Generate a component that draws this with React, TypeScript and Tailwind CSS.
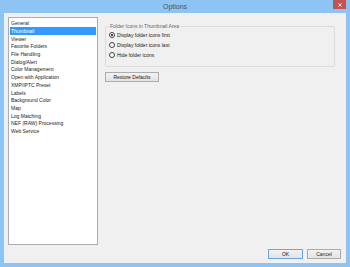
import { useState } from 'react'

const sections = [
  'General',
  'Thumbnail',
  'Viewer',
  'Favorite Folders',
  'File Handling',
  'Dialog/Alert',
  'Color Management',
  'Open with Application',
  'XMP/IPTC Preset',
  'Labels',
  'Background Color',
  'Map',
  'Log Matching',
  'NEF (RAW) Processing',
  'Web Service',
]

const folderOptions = ['Display folder icons first', 'Display folder icons last', 'Hide folder icons']

const font = { fontFamily: '"Liberation Sans", Arial, sans-serif' }

function Radio({ label, checked, onClick }: { label: string; checked: boolean; onClick: () => void }) {
  return (
    <button onClick={onClick} className="flex h-[10px] items-center gap-[2px] text-left">
      <span className="flex h-[6px] w-[6px] items-center justify-center rounded-full border border-[#444] bg-[#fafafa]">
        {checked && <span className="h-[2px] w-[2px] rounded-full bg-[#111]" />}
      </span>
      <span className="text-[5px] leading-[6px] text-[#222]">{label}</span>
    </button>
  )
}

function DialogButton({ children, primary }: { children: string; primary?: boolean }) {
  return (
    <button
      className={
        'flex h-[10px] w-full items-center justify-center border bg-gradient-to-b from-[#f2f2f2] to-[#e3e3e3] text-[5px] leading-[6px] text-[#222] ' +
        (primary ? 'border-[#6aa6e2]' : 'border-[#adadad]')
      }
    >
      {children}
    </button>
  )
}

export default function App() {
  const [selected, setSelected] = useState(1)
  const [folderMode, setFolderMode] = useState(0)

  return (
    <div className="flex h-[267px] w-[350px] flex-col bg-[#8dc4f4]" style={font}>
      {/* Title bar */}
      <div className="relative flex h-[13px] items-center justify-center">
        <span className="text-[7px] leading-[8px] text-[#3d5570]">Options</span>
        <div className="absolute right-[4px] top-0 flex h-[9px] w-[13px] items-center justify-center bg-[#c75050]">
          <svg width="4" height="4" viewBox="0 0 4 4">
            <path d="M0.5 0.5 L3.5 3.5 M3.5 0.5 L0.5 3.5" stroke="#fff" strokeWidth="1" />
          </svg>
        </div>
      </div>

      {/* Client area */}
      <div className="mx-[4px] mb-[4px] flex flex-1 flex-col bg-[#f0f0f0] pb-[4px] pl-[4px] pr-[5px] pt-[4px]">
        <div className="flex h-[228px]">
          {/* Section list */}
          <div className="h-full w-[90px] border border-[#abadb3] bg-white p-[1px] pt-[1.5px]">
            {sections.map((s, i) => (
              <div
                key={s}
                onClick={() => setSelected(i)}
                className={
                  'flex h-[7.7px] items-center pl-[1px] text-[5px] leading-[6px] ' +
                  (i === selected ? 'bg-[#3399ff] text-white' : 'text-[#222]')
                }
              >
                {s}
              </div>
            ))}
          </div>

          {/* Thumbnail settings */}
          <div className="ml-[7px] flex flex-col items-start pt-[6px]">
            <fieldset className="w-[230px] rounded-[2px] border border-[#dcdcdc] px-[3px] pb-[6px]">
              <legend className="px-[1px] text-[5px] leading-[6px] text-[#666]">Folder Icons in Thumbnail Area</legend>
              <div className="flex flex-col pt-[1px]">
                {folderOptions.map((o, i) => (
                  <Radio key={o} label={o} checked={folderMode === i} onClick={() => setFolderMode(i)} />
                ))}
              </div>
            </fieldset>
            <div className="mt-[5px] w-[54px]">
              <DialogButton>Restore Defaults</DialogButton>
            </div>
          </div>
        </div>

        {/* OK / Cancel */}
        <div className="mt-[4px] flex justify-end gap-[4px]">
          <div className="w-[35px]">
            <DialogButton primary>OK</DialogButton>
          </div>
          <div className="w-[34px]">
            <DialogButton>Cancel</DialogButton>
          </div>
        </div>
      </div>
    </div>
  )
}
